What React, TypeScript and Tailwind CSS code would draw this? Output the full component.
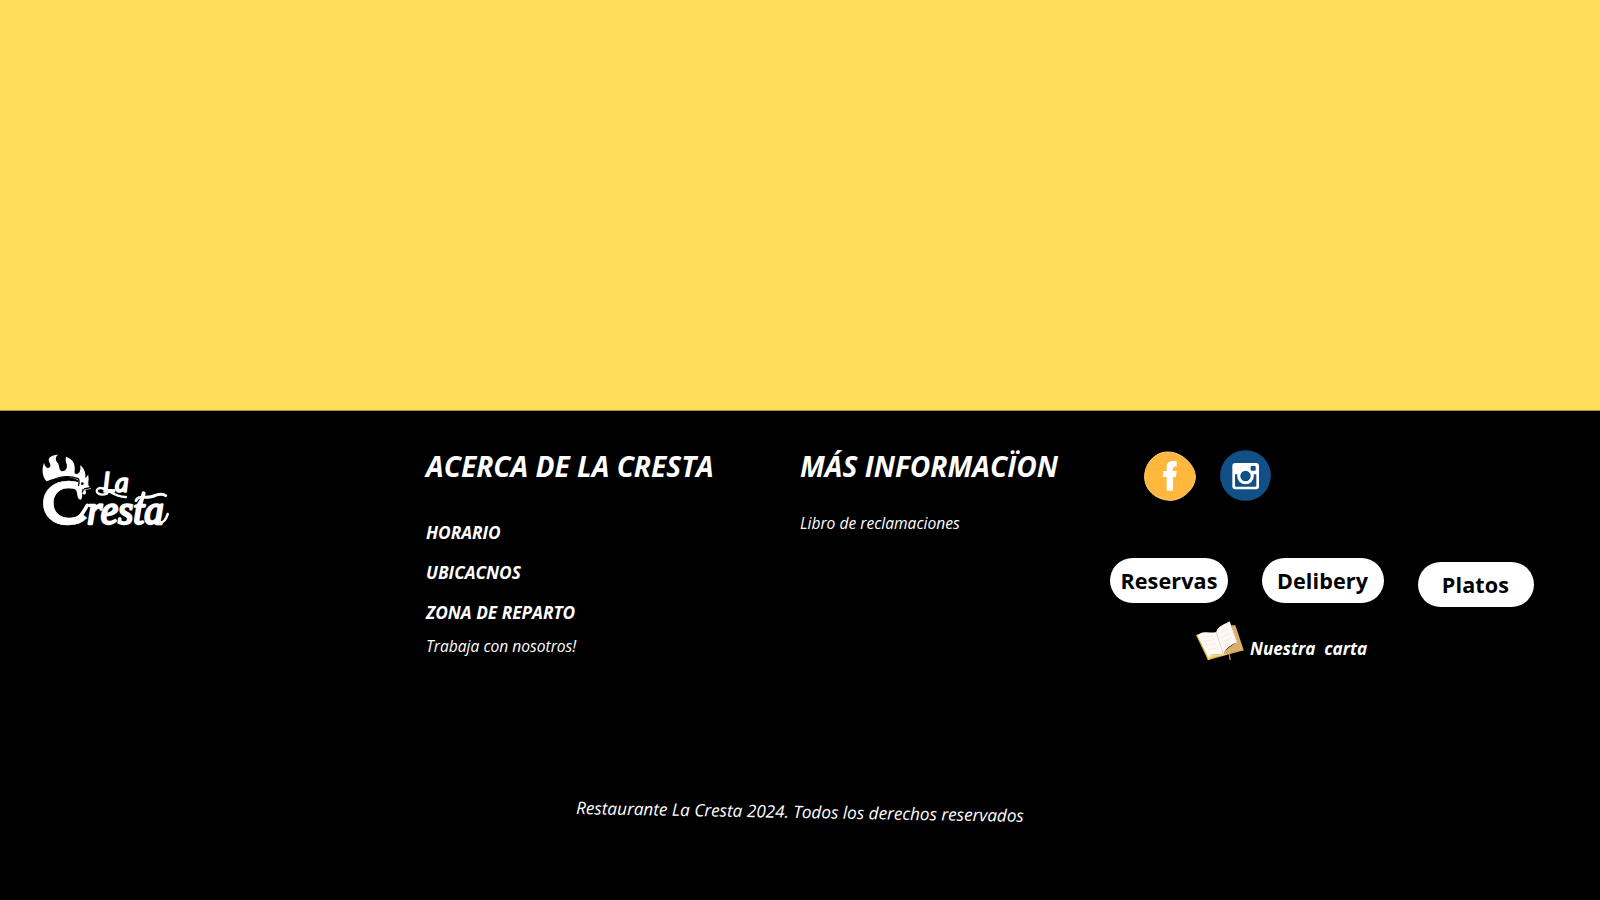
import type { ReactNode } from "react";

function CrestaLogo() {
  return (
    <svg viewBox="0 0 450 330" className="h-[110px] w-[150px]" fill="#fff" role="img" aria-label="La Cresta">
      {/* comb */}
      <path d="M50 124C38 112 34 90 42 68C45 80 52 88 59 82C68 74 48 62 60 52Q68 44 84 44C74 52 77 62 84 70C90 82 86 92 97 94C108 94 114 82 109 70Q105 60 108 50C124 56 132 64 134 80C136 92 130 98 138 102C148 104 154 90 150 76C162 84 168 98 166 114C174 108 175 104 174 100L176 118L174 132L158 148L146 122C122 108 100 108 82 116C68 116 58 120 50 124Z" />
      <text x="32" y="255" fontSize="186" fontWeight="700" fontFamily="Lato, sans-serif" textLength="140" lengthAdjust="spacingAndGlyphs" stroke="#fff" strokeWidth="2">C</text>
      {/* neck outline, face, beak and wattle */}
      <path d="M147 116C162 110 178 122 175 136L184 146L166 150C172 162 164 168 156 160C158 174 154 182 148 178C140 172 144 162 138 150Z" />
      <path d="M54 132C76 106 122 106 144 116C150 120 147 130 145 138" fill="none" stroke="#000" strokeWidth="4" />
      <circle cx="157" cy="131" r="4" fill="#000" />
      <path d="M162 147L184 142M160 147L157 158" fill="none" stroke="#000" strokeWidth="4" />
      <g stroke="#fff" strokeLinejoin="round" fontStyle="italic">
        <text x="218" y="157" fontSize="82" fontWeight="400" fontFamily="Lato, sans-serif" strokeWidth="5" textLength="78" lengthAdjust="spacingAndGlyphs">La</text>
        <text x="171" y="252" fontSize="122" fontFamily="'Liberation Serif', serif" strokeWidth="7" textLength="230" lengthAdjust="spacingAndGlyphs">resta</text>
      </g>
      {/* flourishes */}
      <g fill="none" stroke="#fff" strokeLinecap="round">
        <path d="M138 240C158 226 164 208 172 196" strokeWidth="11" />
        <path d="M232 160C210 170 192 156 204 146C224 134 246 172 288 171" strokeWidth="7" />
        <path d="M318 182C324 162 350 180 376 166C390 161 402 163 407 167" strokeWidth="9" />
        <path d="M341 160L330 196" strokeWidth="12" />
        <path d="M390 248C402 248 409 236 413 222" strokeWidth="8" />
      </g>
    </svg>
  );
}

function FacebookBadge() {
  return (
    <svg viewBox="0 0 156 150" className="h-[50px] w-[52px]" aria-label="Facebook">
      <path d="M69 3C110 1 154 40 154 78C153 116 112 149 78 148C34 146 2 116 2 78C2 38 32 4 69 3Z" fill="#ffb83d" stroke="#ffd27c" strokeWidth="3" />
      <path d="M68 119V78H57V60H68V49C68 34 77 28 98 31V47C89 46 87 48 87 53V60H98L96 78H87V119Z" fill="#fff" />
    </svg>
  );
}

function InstagramBadge() {
  return (
    <svg viewBox="0 0 153 153" className="size-[51px]" aria-label="Instagram">
      <circle cx="76.500" cy="76.500" r="76" fill="#115086" />
      <rect x="37" y="39" width="80" height="79" rx="9" fill="#fff" />
      <path d="M45 73H109V107Q109 110 106 110H48Q45 110 45 107Z" fill="#115086" />
      <circle cx="76.500" cy="78" r="25" fill="#fff" />
      <circle cx="76.500" cy="78" r="15.500" fill="#115086" />
      <rect x="92" y="48" width="15" height="14" rx="2" fill="#115086" />
    </svg>
  );
}

function BookIcon() {
  return (
    <svg viewBox="0 0 144 120" className="h-10 w-12">
      <path d="M0 43L6 40L40 108L92 95L140 82L144 88L94 101L36 118Z" fill="#d9b14a" />
      <path d="M105 13L118 13L142 84L92 96L80 94L122 65Z" fill="#dcae6c" />
      <path d="M101 98L105 116L100 117L98 99Z" fill="#b58a38" />
      <path d="M36 118L34 106C48 94 70 104 82 96L94 100C74 108 52 102 36 118Z" fill="#f5dc7d" />
      <path d="M82 98C94 80 110 72 123 64L142 84L92 98Z" fill="#dcae6c" />
      <path d="M4 42C20 28 44 36 60 34L82 98C62 102 48 96 36 108Z" fill="#fffaf5" />
      <path d="M60 34C68 12 88 10 101 1L123 64C108 72 94 76 82 98Z" fill="#fff6f1" />
      <path d="M60 34L82 98M17 48L50 44M23 60L55 56M29 72L60 68M35 86L65 80M72 36L96 22M77 50L101 36M82 64L107 50" fill="none" stroke="#ebe2de" strokeWidth="2" />
    </svg>
  );
}

function Pill({ className, children }: { className: string; children: ReactNode }) {
  return (
    <button className={`h-[45px] shrink-0 rounded-full bg-white pt-px text-center text-[21.6px] font-bold tracking-[0.1px] text-black ${className}`}>
      {children}
    </button>
  );
}

export default function App() {
  return (
    <div className="flex h-[900px] w-[1600px] flex-col overflow-hidden bg-black font-['Open_Sans',sans-serif] text-white">
      <div className="h-[411px] shrink-0 border-b border-[#a38d3b] bg-[#ffde59]" />
      <footer className="flex flex-1 flex-col">
        <div className="flex h-[386.500px] shrink-0">
          <div className="w-[426px] shrink-0 pt-[29px] pl-[30px]">
            <CrestaLogo />
          </div>
          <section className="w-[374px] shrink-0 pt-[35px] italic">
            <h2 className="mb-[27px] text-[28.15px] leading-10 font-bold whitespace-nowrap">ACERCA DE LA CRESTA</h2>
            <ul className="text-[17.25px] leading-10 font-bold">
              <li>HORARIO</li>
              <li>UBICACNOS</li>
              <li>ZONA DE REPARTO</li>
            </ul>
            <p className="-mt-px text-[15.6px] leading-7">Trabaja con nosotros!</p>
          </section>
          <section className="w-[310px] shrink-0 pt-[35px] italic">
            <h2 className="mb-[23px] text-[28.15px] leading-10 font-bold whitespace-nowrap">MÁS INFORMACÏON</h2>
            <p className="text-[15.6px] leading-7">Libro de reclamaciones</p>
          </section>
          <section className="flex flex-1 flex-col pt-[39px]">
            <div className="flex h-[51px] items-center gap-[24.500px] pl-[33.500px]">
              <FacebookBadge />
              <InstagramBadge />
            </div>
            <div className="mt-[57px] flex items-start">
              <Pill className="w-[118px]">Reservas</Pill>
              <Pill className="ml-[33.500px] w-[122px]">Delibery</Pill>
              <Pill className="mt-1 ml-[34px] w-[116px]">Platos</Pill>
            </div>
            <div className="mt-3.5 flex items-start pl-[86px]">
              <BookIcon />
              <p className="mt-3.5 ml-[6px] text-[17.15px] leading-7 font-bold whitespace-pre italic">{"Nuestra  carta"}</p>
            </div>
          </section>
        </div>
        <p className="rotate-1 text-center text-[17.14px] leading-7 italic">
          Restaurante La Cresta 2024. Todos los derechos reservados
        </p>
      </footer>
    </div>
  );
}
